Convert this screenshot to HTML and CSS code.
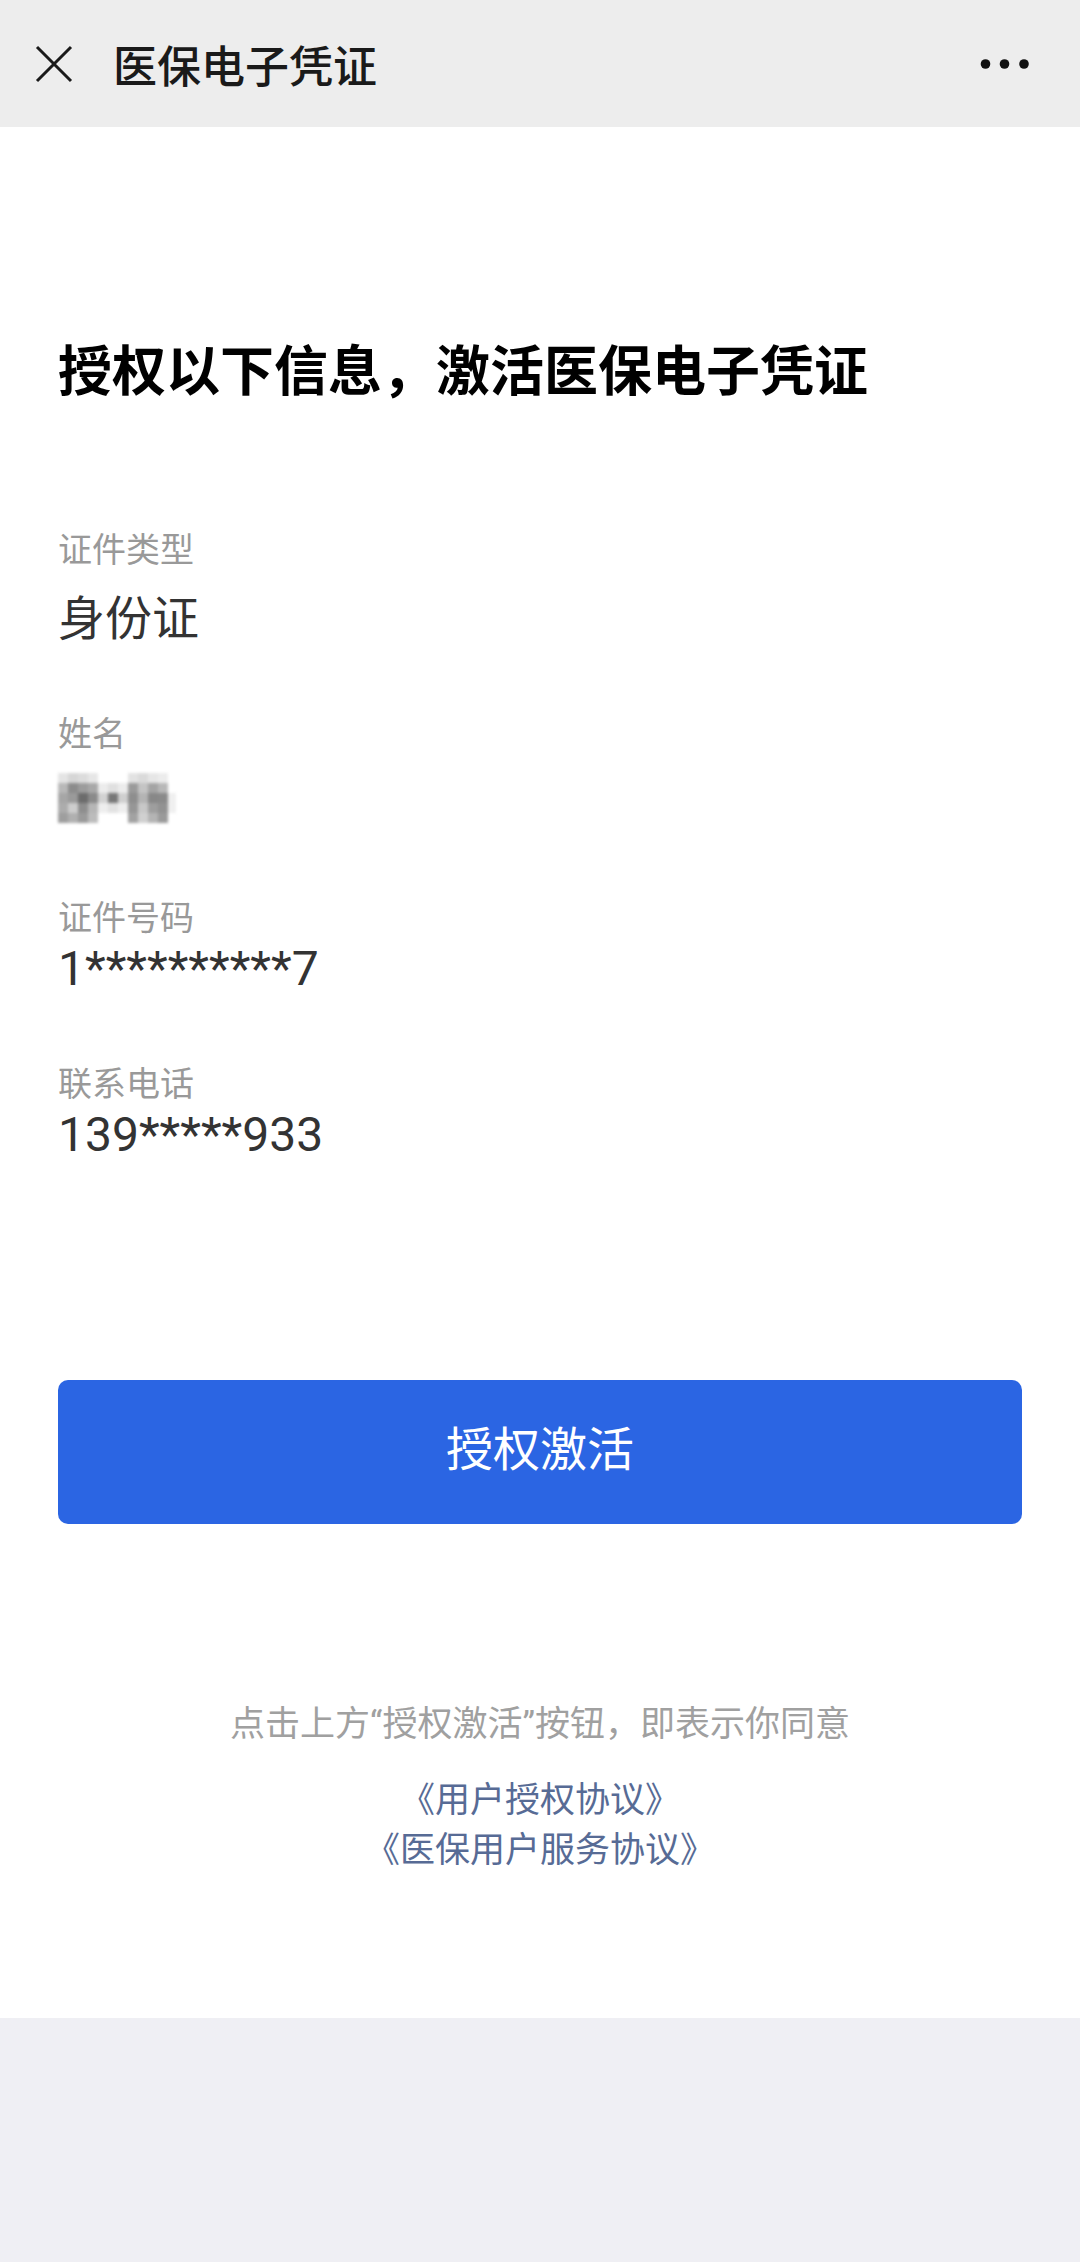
FILE: index.html
```html
<!DOCTYPE html>
<html lang="zh-CN">
<head>
  <meta charset="UTF-8">
  <meta name="viewport" content="width=device-width, initial-scale=1.0">
  <title>医保电子凭证</title>
  <link rel="stylesheet" href="styles.css">
</head>
<body>
  <header class="nav-bar">
    <svg class="nav-close" width="38" height="38" viewBox="0 0 38 38">
      <path d="M2 2 L36 36 M36 2 L2 36" stroke="#1a1a1a" stroke-width="3" fill="none"/>
    </svg>
    <h1 class="nav-title">医保电子凭证</h1>
    <svg class="nav-more" width="50" height="12" viewBox="0 0 50 12">
      <circle cx="5.5" cy="6" r="4.8" fill="#111"/>
      <circle cx="24.5" cy="6" r="4.8" fill="#111"/>
      <circle cx="44" cy="6" r="4.8" fill="#111"/>
    </svg>
  </header>

  <main class="page">
    <h2 class="page-title">授权以下信息，激活医保电子凭证</h2>

    <div class="fields">
      <div class="field">
        <div class="field-label">证件类型</div>
        <div class="field-value">身份证</div>
      </div>
      <div class="field">
        <div class="field-label">姓名</div>
        <div class="field-value blur">
          <!-- mosaic over the real name -->
          <svg width="120" height="52" viewBox="0 0 120 52">
            <g>
              <rect x="0" y="0" width="10" height="10" fill="#e4e4e4"/>
              <rect x="10" y="0" width="10" height="10" fill="#d6d6d6"/>
              <rect x="20" y="0" width="10" height="10" fill="#dcdcdc"/>
              <rect x="30" y="0" width="10" height="10" fill="#e6e6e6"/>
              <rect x="0" y="10" width="10" height="10" fill="#b8b8b8"/>
              <rect x="10" y="10" width="10" height="10" fill="#8c8c8c"/>
              <rect x="20" y="10" width="10" height="10" fill="#9c9c9c"/>
              <rect x="30" y="10" width="10" height="10" fill="#a8a8a8"/>
              <rect x="0" y="20" width="10" height="10" fill="#a6a6a6"/>
              <rect x="10" y="20" width="10" height="10" fill="#9a9a9a"/>
              <rect x="20" y="20" width="10" height="10" fill="#6c6c6c"/>
              <rect x="30" y="20" width="10" height="10" fill="#8a8a8a"/>
              <rect x="0" y="30" width="10" height="10" fill="#acacac"/>
              <rect x="10" y="30" width="10" height="10" fill="#cdcdcd"/>
              <rect x="20" y="30" width="10" height="10" fill="#8e8e8e"/>
              <rect x="30" y="30" width="10" height="10" fill="#b6b6b6"/>
              <rect x="0" y="40" width="10" height="10" fill="#9e9e9e"/>
              <rect x="10" y="40" width="10" height="10" fill="#b0b0b0"/>
              <rect x="20" y="40" width="10" height="10" fill="#9a9a9a"/>
              <rect x="30" y="40" width="10" height="10" fill="#bcbcbc"/>

              <rect x="40" y="10" width="10" height="10" fill="#ececec"/>
              <rect x="50" y="10" width="10" height="10" fill="#e0e0e0"/>
              <rect x="60" y="10" width="10" height="10" fill="#ececec"/>
              <rect x="40" y="20" width="10" height="10" fill="#d2d2d2"/>
              <rect x="50" y="20" width="10" height="10" fill="#777"/>
              <rect x="60" y="20" width="10" height="10" fill="#cfcfcf"/>
              <rect x="40" y="30" width="10" height="10" fill="#eeeeee"/>
              <rect x="50" y="30" width="10" height="10" fill="#e2e2e2"/>
              <rect x="60" y="30" width="10" height="10" fill="#eeeeee"/>

              <rect x="70" y="0" width="10" height="10" fill="#e2e2e2"/>
              <rect x="80" y="0" width="10" height="10" fill="#dadada"/>
              <rect x="90" y="0" width="10" height="10" fill="#e6e6e6"/>
              <rect x="100" y="0" width="10" height="10" fill="#ececec"/>
              <rect x="70" y="10" width="10" height="10" fill="#9a9a9a"/>
              <rect x="80" y="10" width="10" height="10" fill="#c4c4c4"/>
              <rect x="90" y="10" width="10" height="10" fill="#a4a4a4"/>
              <rect x="100" y="10" width="10" height="10" fill="#b8b8b8"/>
              <rect x="70" y="20" width="10" height="10" fill="#8e8e8e"/>
              <rect x="80" y="20" width="10" height="10" fill="#b4b4b4"/>
              <rect x="90" y="20" width="10" height="10" fill="#888"/>
              <rect x="100" y="20" width="10" height="10" fill="#8a8a8a"/>
              <rect x="70" y="30" width="10" height="10" fill="#969696"/>
              <rect x="80" y="30" width="10" height="10" fill="#c8c8c8"/>
              <rect x="90" y="30" width="10" height="10" fill="#9e9e9e"/>
              <rect x="100" y="30" width="10" height="10" fill="#929292"/>
              <rect x="70" y="40" width="10" height="10" fill="#a2a2a2"/>
              <rect x="80" y="40" width="10" height="10" fill="#d0d0d0"/>
              <rect x="90" y="40" width="10" height="10" fill="#b4b4b4"/>
              <rect x="100" y="40" width="10" height="10" fill="#9a9a9a"/>
              <rect x="110" y="20" width="8" height="20" fill="#f0f0f0"/>
            </g>
          </svg>
        </div>
      </div>
      <div class="field">
        <div class="field-label">证件号码</div>
        <div class="field-value num">1**********7</div>
      </div>
      <div class="field">
        <div class="field-label">联系电话</div>
        <div class="field-value num">139*****933</div>
      </div>
    </div>

    <button class="btn-primary">授权激活</button>

    <div class="agreement">
      <p class="agreement-tip">点击上方“授权激活”按钮，即表示你同意</p>
      <a class="agreement-link" href="#">《用户授权协议》</a>
      <a class="agreement-link" href="#">《医保用户服务协议》</a>
    </div>
  </main>
</body>
</html>
```

FILE: styles.css
```css
body {
  margin: 0;
  font-family: "Noto Sans CJK SC", sans-serif;
  background-color: #efeff4;
  color: #333;
}

/* top bar */
.nav-bar {
  display: flex;
  align-items: center;
  height: 127px;
  padding: 0 50px 0 35px;
  background-color: #ededed;
}
.nav-close {
  flex-shrink: 0;
}
.nav-title {
  margin: 0 0 0 40px;
  font-size: 44px;
  font-weight: 500;
  line-height: 60px;
  color: #1a1a1a;
  flex: 1;
}
.nav-more {
  flex-shrink: 0;
}

/* content */
.page {
  background-color: #fff;
  padding: 203px 58px 146px;
}
.page-title {
  margin: 0 0 118px;
  font-size: 54px;
  font-weight: 700;
  line-height: 76px;
  color: #000;
}

.fields {
  display: flex;
  flex-direction: column;
  gap: 61px;
}
.field-label {
  font-size: 34px;
  line-height: 48px;
  color: #999;
}
.field-value {
  margin-top: 11px;
  font-size: 47px;
  line-height: 64px;
  color: #333;
}
.field-value.num {
  margin-top: 1px;
  font-family: Roboto, "Noto Sans CJK SC", sans-serif;
  font-size: 48px;
  line-height: 56px;
}
.field-value.blur {
  display: flex;
  align-items: center;
  height: 64px;
}
.field-value.blur svg {
  filter: blur(1.5px);
}

.btn-primary {
  display: block;
  width: 100%;
  height: 144px;
  margin-top: 217px;
  padding: 0 0 12px;
  border: none;
  border-radius: 10px;
  background-color: #2b65e3;
  color: #fff;
  font-family: "Noto Sans CJK SC", sans-serif;
  font-size: 47px;
  line-height: 132px;
  cursor: pointer;
}

.agreement {
  margin-top: 176px;
  text-align: center;
}
.agreement-tip {
  margin: 0 0 22px;
  font-family: Roboto, "Noto Sans CJK SC", sans-serif;
  font-size: 35px;
  line-height: 50px;
  color: #a0a0a0;
}
.agreement-link {
  display: block;
  font-size: 35px;
  line-height: 50px;
  color: #576b95;
  text-decoration: none;
  font-feature-settings: "halt";
}
```
